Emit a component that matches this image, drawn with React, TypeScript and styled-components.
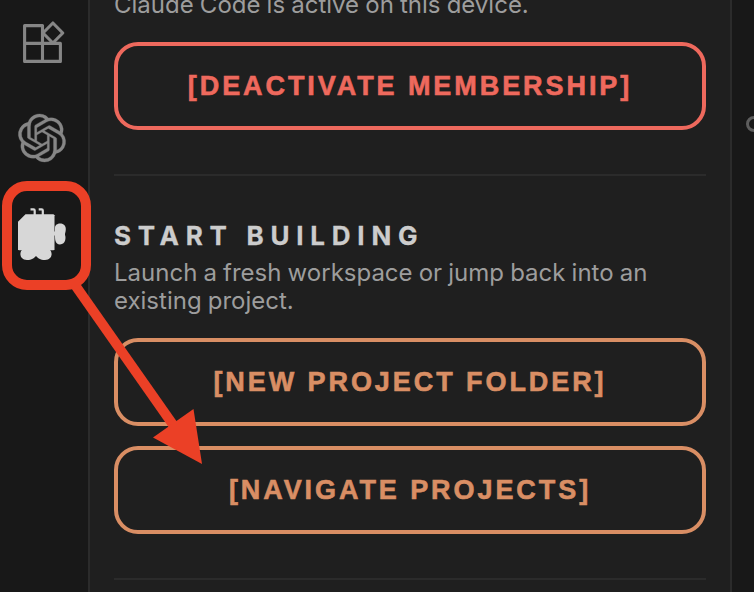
import React from "react";
import styled, { createGlobalStyle } from "styled-components";
import { SiOpenai } from "react-icons/si";

const GlobalStyle = createGlobalStyle`
  *, *::before, *::after { box-sizing: border-box; }
  html, body { margin: 0; padding: 0; background: #181818; overflow: hidden; }
`;

const Window = styled.div`
  position: relative;
  display: flex;
  width: 754px;
  height: 592px;
  overflow: hidden;
  background: #181818;
  font-family: Inter, "Liberation Sans", sans-serif;
`;

const ActivityBar = styled.nav`
  display: flex;
  flex-direction: column;
  flex: none;
  width: 90px;
  padding: 18px 0 0 18px;
  gap: 48px;
  border-right: 2px solid #2b2b2b;
  color: #868686;
`;

const ActivityItem = styled.div<{ $active?: boolean }>`
  width: 48px;
  height: 48px;
  color: ${(p) => (p.$active ? "#d7d7d7" : "#868686")};
  svg { display: block; overflow: visible; }
`;

const AssistantIcon = styled(SiOpenai)`
  stroke: currentColor;
  stroke-width: 0.15px;
`;

const SidePanel = styled.main`
  flex: none;
  width: 642px;
  height: 592px;
  padding: 0 24px;
  overflow: hidden;
  background: #1f1f1f;
  border-right: 2px solid #2b2b2b;
`;

const Section = styled.section<{ $first?: boolean }>`
  display: flex;
  flex-direction: column;
  height: ${(p) => (p.$first ? 176 : 404)}px;
  border-bottom: 2px solid #2b2b2b;
`;

const Heading = styled.h2`
  margin: 44px 0 0;
  height: 38px;
  line-height: 32px;
  font-size: 26px;
  font-weight: 700;
  letter-spacing: 6.75px;
  -webkit-text-stroke: 0.3px currentColor;
  white-space: nowrap;
  color: #cccccc;
`;

const Text = styled.p<{ $clipped?: boolean }>`
  margin: ${(p) => (p.$clipped ? "-9px 0 23px" : "1px 0 23px")};
  font-size: 24px;
  line-height: 28px;
  word-spacing: -0.6px;
  white-space: nowrap;
  color: #9d9d9d;
`;

const Actions = styled.div`
  display: flex;
  flex-direction: column;
  gap: 20px;
`;

const ActionButton = styled.button<{ $danger?: boolean }>`
  height: 88px;
  padding: 0;
  border: 4px solid ${(p) => (p.$danger ? "#ee695d" : "#d98e64")};
  border-radius: 24px;
  background: transparent;
  color: ${(p) => (p.$danger ? "#ee695d" : "#d98e64")};
  font: 700 27px/30px "Liberation Sans", Arial, sans-serif;
  letter-spacing: 2.93px;
  -webkit-text-stroke: 0.6px currentColor;
  white-space: nowrap;
`;

const EditorEdge = styled.aside`
  flex: 1;
  padding: 116px 0 0 14px;
  overflow: hidden;
`;

const Ring = styled.div`
  width: 16px;
  height: 16px;
  border: 3px solid #5d5d5d;
  border-radius: 50%;
`;

const Annotation = styled.svg`
  position: absolute;
  inset: 0;
  pointer-events: none;
`;

const ExtensionsIcon = () => (
  <svg width="48" height="48" fill="none" stroke="currentColor" strokeWidth="3.1" strokeLinejoin="round">
    <path d="M6.6 7.6H24.5V25.4H42.4V43.4H6.6ZM6.6 25.4H24.5V43.4" />
    <path d="M34.9 5L44.8 15L34.9 25L25 15Z" />
  </svg>
);

const MascotIcon = () => (
  <svg width="48" height="56" fill="currentColor">
    <path d="M7.5 4.3H35.5L36.5 5.3V39.3L35.5 40.3H0.8L0 39.3V11.8Z" />
    <path d="M12.5 -.7H15.5Q16.7 -.7 16.7 .5V5M20.7 -.7H23.6Q24.8 -.7 24.8 .5V5" fill="none" stroke="currentColor" strokeWidth="2.2" />
    <path d="M37 18C37 12 47.8 12 47.8 19C47.8 22 46.8 23 47 25C48 27 48 34.4 42 34.4C37 34.4 37 29 37 26L36 25V22L37 21Z" />
    <path d="M4 40C1 43 2 50 9 50C14 50 16 48 18 46C20 48 22 50 27 50C34 50 35 43 32 40Z" />
  </svg>
);

export default function App() {
  return (
    <>
      <GlobalStyle />
      <Window>
        <ActivityBar>
          <ActivityItem><ExtensionsIcon /></ActivityItem>
          <ActivityItem><AssistantIcon size={48} /></ActivityItem>
          <ActivityItem $active><MascotIcon /></ActivityItem>
        </ActivityBar>
        <SidePanel>
          <Section $first>
            <Text $clipped>Claude Code is active on this device.</Text>
            <ActionButton $danger>[DEACTIVATE MEMBERSHIP]</ActionButton>
          </Section>
          <Section>
            <Heading>START BUILDING</Heading>
            <Text>Launch a fresh workspace or jump back into an<br />existing project.</Text>
            <Actions>
              <ActionButton>[NEW PROJECT FOLDER]</ActionButton>
              <ActionButton>[NAVIGATE PROJECTS]</ActionButton>
            </Actions>
          </Section>
        </SidePanel>
        <EditorEdge><Ring /></EditorEdge>
        <Annotation width="754" height="592">
          <rect x="7" y="186" width="79" height="99" rx="20" fill="none" stroke="#eb4026" strokeWidth="10" />
          <path d="M75 285L176 429" stroke="#eb4026" strokeWidth="10" />
          <path d="M202 464L153 437.5L193.5 409Z" fill="#eb4026" />
        </Annotation>
      </Window>
    </>
  );
}
